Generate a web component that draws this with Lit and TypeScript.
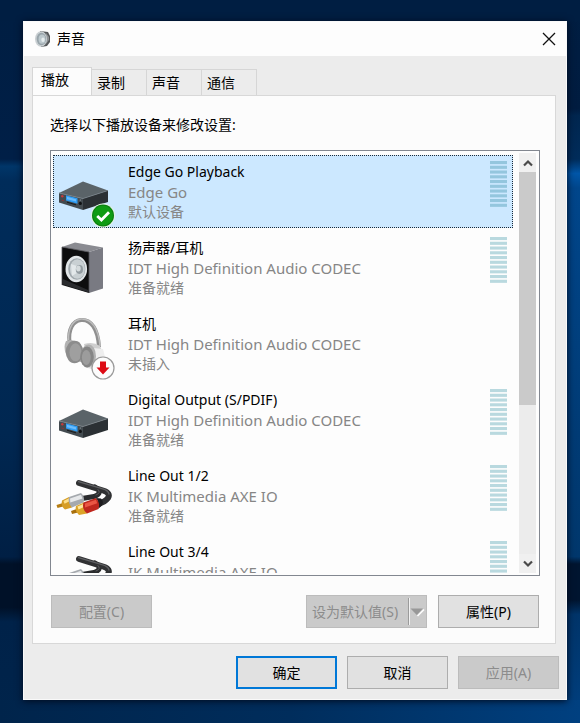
import { LitElement, html, svg, css } from "lit";
import { customElement, property, state } from "lit/decorators.js";
import { classMap } from "lit/directives/class-map.js";

type Kind = "box" | "speaker" | "headphones" | "cable";
type Badge = "none" | "default" | "unplugged";

interface Device {
  name: string;
  driver: string;
  status: string;
  kind: Kind;
  badge: Badge;
  meter: boolean;
}

const DEVICES: Device[] = [
  { name: "Edge Go Playback", driver: "Edge Go", status: "默认设备", kind: "box", badge: "default", meter: true },
  { name: "扬声器/耳机", driver: "IDT High Definition Audio CODEC", status: "准备就绪", kind: "speaker", badge: "none", meter: true },
  { name: "耳机", driver: "IDT High Definition Audio CODEC", status: "未插入", kind: "headphones", badge: "unplugged", meter: false },
  { name: "Digital Output (S/PDIF)", driver: "IDT High Definition Audio CODEC", status: "准备就绪", kind: "box", badge: "none", meter: true },
  { name: "Line Out 1/2", driver: "IK Multimedia AXE IO", status: "准备就绪", kind: "cable", badge: "none", meter: true },
  { name: "Line Out 3/4", driver: "IK Multimedia AXE IO", status: "准备就绪", kind: "cable", badge: "none", meter: true },
];

const TABS = ["播放", "录制", "声音", "通信"];

const boxArt = svg`
  <path d="M5 38 29 26.5 54 35.5 29 43.5Z" fill="#5a6368"/>
  <path d="M5 38 29 43.5V55L5 47.5Z" fill="#434b50"/>
  <path d="M29 43.5 54 35.5V47L29 55Z" fill="#2b3034"/>
  <path d="M5 38 29 43.5 54 35.5" fill="none" stroke="#7b848a" stroke-width=".8"/>
  <path d="M12 40.3 23.5 43.2V48.7L12 45.4Z" fill="#2f9df4"/>
  <path d="M13 41.8 22 44.2V46.6L13 44.2Z" fill="#6cbcfb"/>
  <path d="M13 47.2 22 49.8" stroke="#161a1d" stroke-width="1"/>
  <circle cx="8.3" cy="41.2" r="1.2" fill="#c83a3a"/>
  <path d="M7.5 45 10 45.8" stroke="#8b3535" stroke-width="1"/>
  <circle cx="26.3" cy="48.4" r="1.6" fill="#101214"/>
  <circle cx="26.3" cy="45" r=".6" fill="#aab2b6"/>`;

const speakerArt = svg`
  <path d="M8 16 21 11.5 49 16.5 35 21Z" fill="#8a8b91"/>
  <path d="M35 21 49 16.5V57.5L35 62Z" fill="#797a82"/>
  <path d="M8 16 35 21V62L8 54Z" fill="#0d0d0e"/>
  <path d="M8 54V16L35 21V62" fill="none" stroke="#55565b" stroke-width=".8"/>
  <path d="M9 48 34 59V61.2L9 53.4Z" fill="#2a2b2e"/>
  <ellipse cx="22.3" cy="38" rx="10.8" ry="13.2" fill="#e2e6e8"/>
  <ellipse cx="22.8" cy="38" rx="8.6" ry="10.8" fill="#9fa7ac"/>
  <ellipse cx="23.4" cy="38" rx="7.5" ry="9.8" fill="#c9d0d3"/>
  <path d="M17 33 26 36V40L18 45Z" fill="#e3e8ea"/>
  <ellipse cx="25.4" cy="38.5" rx="3.6" ry="4.4" fill="#929ba0"/>
  <ellipse cx="24.4" cy="37.6" rx="2.3" ry="3" fill="#d5dbdd"/>`;

const headphonesArt = svg`
  <path d="M15.5 35C14 22 19 14 27 13 37 12 44 22 45 40" fill="none" stroke="#8f8f8f" stroke-width="4"/>
  <path d="M14.6 33C14 21 19 13 27 12 38 11.4 44.6 22 46 39" fill="none" stroke="#bdbdbd" stroke-width="1.4"/>
  <path d="M12 34Q9 40 12 47L17 53 27 55 30 45 25 35 17 33Z" fill="#b2b2b2"/>
  <ellipse cx="20.5" cy="45" rx="8.7" ry="11.2" fill="#8c8c8c"/>
  <ellipse cx="21.5" cy="45.3" rx="6" ry="9" fill="#9f9f9f"/>
  <path d="M30 37Q39 34 46 39L50 49 45 56 34 60Z" fill="#cfcfcf"/>
  <path d="M39 41 49 42 51 50 39 53Z" fill="#eeeeee"/>
  <ellipse cx="34.5" cy="49" rx="7.5" ry="11.6" fill="#b0b0b0"/>
  <ellipse cx="33" cy="50" rx="6.8" ry="10.4" fill="#858585"/>
  <ellipse cx="32.3" cy="50.5" rx="4.4" ry="7.6" fill="#9c9c9c"/>
  <path d="M34 61 41 63 39 58Z" fill="#dcdcdc"/>`;

const cableArt = svg`
  <g fill="none" stroke-linecap="round">
    <path d="M41 28Q50 34 40 37.5L28 39.5" stroke="#2b2c2e" stroke-width="5"/>
    <path d="M25 24 49 31.5Q57 34 54 39 51 43 44 45" stroke="#303133" stroke-width="6"/>
    <path d="M24.5 22.6 48 29.6Q54 31 55 35" stroke="#5f6063" stroke-width="1.3"/>
    <path d="M44 30.5Q47.500 34 42 36" stroke="#58595c" stroke-width="1"/>
  </g>
  <path d="M2.500 46 9 44V47.600L3.500 49Z" fill="#b67d12"/>
  <path d="M8 41.500 15 38 18 48.500 11 50.500Q6.500 47 8 41.500Z" fill="#d69d25"/>
  <path d="M9.500 42 15.500 39 16 42 10.500 44.800Z" fill="#ffe08a"/>
  <path d="M15 38 27 34Q31.500 38 29.500 43.500L18 48.500Q13.500 44 15 38Z" fill="#a5a9ae"/>
  <path d="M16 39.500 27 35.800 28.500 39.500 16.300 43.500Z" fill="#e6e8ea"/>
  <path d="M17 52 24 49.600V53.400L18 55Z" fill="#a86f0c"/>
  <path d="M22 47 30 43.500 33 54.500 25 56Q20.500 52 22 47Z" fill="#dca429"/>
  <path d="M23.500 47.600 30 44.800 30.500 47.800 24.500 50.500Z" fill="#ffe79c"/>
  <path d="M29.500 43.500 42 39Q46.500 43 44.500 50L33 54.500Q27.500 50 29.500 43.500Z" fill="#bf271e"/>
  <path d="M31 44.600 42 40.800 43.200 44.200 31 48.500Z" fill="#ea5644"/>
  <path d="M42 39 47 39.500Q50.500 43 47.500 47L44.500 49.500Q46.500 44 42 39Z" fill="#1d1d1f"/>`;

const defaultBadge = svg`
  <circle cx="49" cy="60.5" r="12" fill="#e4f1e4"/>
  <circle cx="49" cy="60.5" r="11" fill="#0b7d10"/>
  <circle cx="49" cy="60.5" r="10" fill="#0e9b13"/>
  <path d="M43.2 61 47.4 65 55 57.2" fill="none" stroke="#fff" stroke-width="2.8"/>`;

const unpluggedBadge = svg`
  <circle cx="49" cy="61" r="11" fill="#fcfcfc" stroke="#9a9a9a" stroke-width="1.2"/>
  <path d="M46 54.5H52V60.5H55.5L49 67.5 42.5 60.5H46Z" fill="#dd0b14"/>`;

@customElement("device-icon")
export class DeviceIcon extends LitElement {
  @property() kind: Kind = "box";
  @property() badge: Badge = "none";

  static styles = css`
    :host { display: block; width: 62px; height: 73px; }
    .art { display: block; width: 100%; height: 100%; }
  `;

  render() {
    const art = { box: boxArt, speaker: speakerArt, headphones: headphonesArt, cable: cableArt }[this.kind];
    return html`<svg class="art" viewBox="0 0 62 73" aria-hidden="true">
      ${art}
      ${this.badge === "default" ? defaultBadge : this.badge === "unplugged" ? unpluggedBadge : ""}
    </svg>`;
  }
}

@customElement("app-root")
export class AppRoot extends LitElement {
  @state() private tab = 0;
  @state() private selected = 0;

  static styles = css`
    * { box-sizing: border-box; }
    :host {
      display: flex;
      height: 100vh;
      min-height: 480px;
      box-sizing: border-box;
      padding: 21px 13px 23px 23px;
      font: 14px/20px "Noto Sans", "Noto Sans CJK SC", sans-serif;
      color: #000;
      background:
        linear-gradient(#001e42, #001e42) top / 100% 21px no-repeat,
        linear-gradient(90deg, #00244b, #002d5c 50%, #004080) bottom / 100% 23px no-repeat,
        linear-gradient(#001e42, #001f47 22%, #003669 23%, #002c5a 25%, #002751 60%, #001f44 77%, #001128 78%, #001128 84%, #002249 86%, #00244b) left / 50% 100% no-repeat,
        linear-gradient(#001e42, #001c40 15%, #00264f 16%, #002c5a 22%, #0056a8 24%, #00468b 26%, #003b75 60%, #00376c 77%, #001530 78%, #001530 83%, #003469 85%, #004080) right / 50% 100% no-repeat;
    }
    .dialog {
      flex: 1;
      min-width: 0;
      display: flex;
      flex-direction: column;
      background: #ececec;
      border: 1px solid #f9f9f9;
      box-shadow: 0 1px 7px #000a1c;
    }
    .titlebar {
      display: flex;
      align-items: center;
      height: 34px;
      padding: 0 9px 0 10px;
      gap: 6px;
      background: #fdfdfd;
    }
    .app-icon { width: 17px; height: 18px; }
    .title { flex: 1; margin: 0; font-size: 14px; font-weight: 400; }
    .close { width: 16px; height: 16px; padding: 0; border: 0; background: none; }
    .close svg, .split svg, .arrow svg { display: block; }
    .content { flex: 1; min-height: 0; display: flex; flex-direction: column; padding: 11px 10px 0 8px; }
    .tabs { display: flex; align-items: flex-end; }
    .tab {
      width: 55px;
      height: 26px;
      margin: 0;
      padding: 0 0 0 5px;
      border: 1px solid #d6d6d6;
      border-width: 1px 1px 0 0;
      background: #ececec;
      font: inherit;
      color: inherit;
      text-align: left;
    }
    .tab.active {
      width: 60px;
      height: 29px;
      margin-bottom: -1px;
      padding: 0 0 4px 8px;
      border-left-width: 1px;
      background: #fcfcfc;
    }
    .panel {
      flex: 1;
      min-height: 0;
      display: flex;
      flex-direction: column;
      padding: 19px 15px 15px 17px;
      background: #fcfcfc;
      border: 1px solid #d8d8d8;
    }
    .prompt { margin: 0 0 15px; }
    .listbox {
      flex: 1;
      min-height: 0;
      display: flex;
      gap: 6px;
      padding: 2px;
      border: 1px solid #828790;
      background: #fdfdfd;
    }
    .devices {
      flex: 1;
      min-width: 0;
      overflow: hidden;
      display: flex;
      flex-direction: column;
      gap: 3px;
      margin: 0;
      padding: 2px 0 0;
      list-style: none;
    }
    .device {
      flex: none;
      display: flex;
      height: 73px;
      border: 1px dotted transparent;
      padding-right: 5px;
    }
    .device.selected { background: #cce8ff; border-color: #1c2a38; }
    .device device-icon { margin-top: -1px; }
    .text { flex: 1; min-width: 0; margin: 6px 0 0 12px; color: #868686; white-space: nowrap; }
    .text p { margin: 0; }
    .text .name { color: #000; }
    .text .driver { font-size: 15px; }
    .meter { width: 17px; height: 46px; margin-top: 5px; fill: #b9d9df; }
    .selected .meter { fill: #94c6de; }
    .scrollbar { width: 17px; margin-right: 1px; display: flex; flex-direction: column; background: #ececec; }
    .arrow { height: 19px; padding: 0; border: 0; display: grid; place-items: center; background: #f0f0f0; }
    .track { flex: 1; }
    .thumb { height: 61%; background: #cacaca; }
    .actions { display: flex; gap: 11px; margin-top: 19px; padding: 0 1px; }
    .spacer { flex: 1; }
    .footer { display: flex; justify-content: flex-end; gap: 10px; padding: 12px 7px 10px; }
    .btn {
      width: 101px;
      height: 33px;
      padding: 0;
      border: 1px solid #adadad;
      background: #e1e1e1;
      font: inherit;
      color: #000;
    }
    .btn:disabled { background: #cacaca; border-color: #bcbcbc; color: #8c8c8c; }
    .btn.primary { border: 2px solid #0078d7; }
    .split { width: 121px; display: flex; align-items: center; justify-content: space-between; padding: 0 1px 0 5px; }
  `;

  private renderDevice(d: Device, i: number) {
    return html`<li
      class=${classMap({ device: true, selected: i === this.selected })}
      role="option"
      aria-selected=${i === this.selected ? "true" : "false"}
      @click=${() => (this.selected = i)}
    >
      <device-icon kind=${d.kind} badge=${d.badge}></device-icon>
      <div class="text">
        <p class="name">${d.name}</p>
        <p class="driver">${d.driver}</p>
        <p>${d.status}</p>
      </div>
      ${d.meter
        ? html`<svg class="meter" viewBox="0 0 17 46" aria-hidden="true">
            ${Array.from({ length: 10 }, (_, n) => svg`<rect y=${n * 4.75} width="17" height="3.1"/>`)}
          </svg>`
        : ""}
    </li>`;
  }

  render() {
    return html`
      <section class="dialog" role="dialog" aria-labelledby="title">
        <header class="titlebar">
          <svg class="app-icon" viewBox="0 0 17 18" aria-hidden="true">
            <path d="M6 1 14 2 16 6V12L13 16 7 17Z" fill="#55585a"/>
            <path d="M12 3 15 7V10L12 14Z" fill="#8e9295"/>
            <ellipse cx="7" cy="9" rx="6" ry="7.8" fill="#c9cfd2"/>
            <ellipse cx="7.4" cy="9" rx="4.7" ry="6.2" fill="#98a4aa"/>
            <ellipse cx="8" cy="9.2" rx="3.4" ry="4.6" fill="#bcc8cd"/>
            <ellipse cx="9" cy="9.8" rx="1.7" ry="2.3" fill="#e6edef"/>
          </svg>
          <h1 class="title" id="title">声音</h1>
          <button class="close" aria-label="关闭">
            <svg width="16" height="16" viewBox="0 0 16 16">
              <path d="M2 2 14 14M14 2 2 14" stroke="#111" stroke-width="1.3" fill="none"/>
            </svg>
          </button>
        </header>
        <div class="content">
          <div class="tabs" role="tablist">
            ${TABS.map(
              (t, i) => html`<button
                class=${classMap({ tab: true, active: i === this.tab })}
                role="tab"
                aria-selected=${i === this.tab ? "true" : "false"}
                @click=${() => (this.tab = i)}
              >${t}</button>`
            )}
          </div>
          <div class="panel" role="tabpanel">
            <p class="prompt" id="prompt">选择以下播放设备来修改设置:</p>
            <div class="listbox">
              <ul class="devices" role="listbox" aria-labelledby="prompt">
                ${DEVICES.map((d, i) => this.renderDevice(d, i))}
              </ul>
              <div class="scrollbar">
                <button class="arrow" aria-label="向上滚动" tabindex="-1">
                  <svg width="10" height="8" viewBox="0 0 10 8"><path d="M1 6.5 5 2.5 9 6.5" fill="none" stroke="#4a4a4a" stroke-width="2.2"/></svg>
                </button>
                <div class="track"><div class="thumb"></div></div>
                <button class="arrow" aria-label="向下滚动" tabindex="-1">
                  <svg width="10" height="8" viewBox="0 0 10 8"><path d="M1 1.5 5 5.5 9 1.5" fill="none" stroke="#4a4a4a" stroke-width="2.2"/></svg>
                </button>
              </div>
            </div>
            <div class="actions">
              <button class="btn" disabled>配置(C)</button>
              <span class="spacer"></span>
              <button class="btn split" disabled>
                <span>设为默认值(S)</span>
                <svg width="18" height="27" viewBox="0 0 18 27" aria-hidden="true">
                  <path d="M1.5 0V27" stroke="#9b9b9b"/>
                  <path d="M2.5 0V27" stroke="#f2f2f2"/>
                  <path d="M10.5 18 17 11.5" stroke="#fff" stroke-width="1.6"/>
                  <path d="M3.5 10.5H16L9.8 17Z" fill="#989898"/>
                </svg>
              </button>
              <button class="btn">属性(P)</button>
            </div>
          </div>
        </div>
        <footer class="footer">
          <button class="btn primary">确定</button>
          <button class="btn">取消</button>
          <button class="btn" disabled>应用(A)</button>
        </footer>
      </section>
    `;
  }
}
